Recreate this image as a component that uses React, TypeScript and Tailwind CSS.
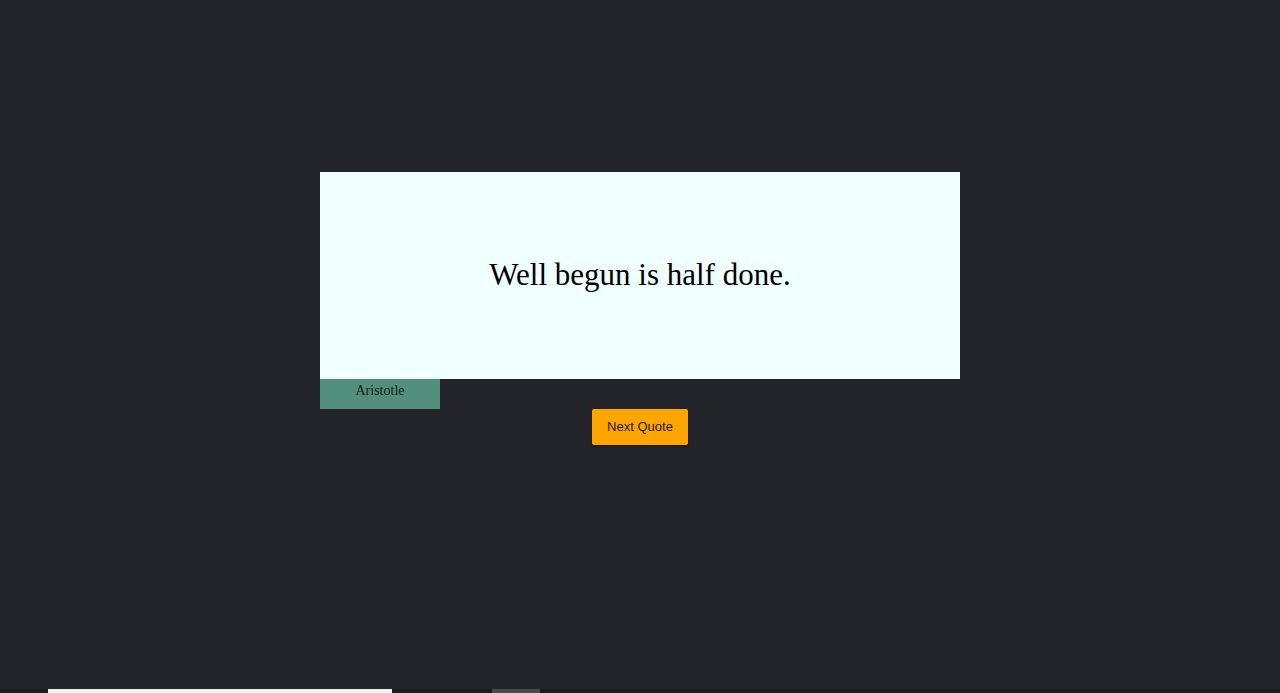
import React from "react";

export default function App() {
  return (
    <div className="h-[693px] w-full overflow-hidden bg-[#232429] flex flex-col">
      <div className="h-[172px] shrink-0" />
      <div className="w-[640px] mx-auto">
        <div className="h-[207px] bg-[#f0ffff] flex items-center justify-center pb-[3px]">
          <p className="text-[31px] leading-none text-black [font-family:'Liberation_Serif',serif]">
            Well begun is half done.
          </p>
        </div>
        <div className="w-[120px] h-[30px] bg-[#52907d] text-center pt-[2px] leading-[16px]">
          <span className="text-[14px] leading-[16px] text-[#1a1a1a] [font-family:'Liberation_Serif',serif]">Aristotle</span>
        </div>
      </div>
      <div className="flex justify-center">
        <button className="w-[96px] h-[36px] bg-[#ffa500] rounded-[2px] shadow-[0_1px_2px_rgba(0,0,0,0.5)] text-[13px] text-[#1a1a1a] [font-family:'Liberation_Sans',sans-serif]">
          Next Quote
        </button>
      </div>
      <div className="flex-1" />
      <div className="h-[4px] shrink-0 bg-[#1b1b1e] flex">
        <div className="w-[48px]" />
        <div className="w-[344px] bg-[#f2f2f2]" />
        <div className="w-[100px]" />
        <div className="w-[48px] bg-[#4a4a4c]" />
      </div>
    </div>
  );
}
